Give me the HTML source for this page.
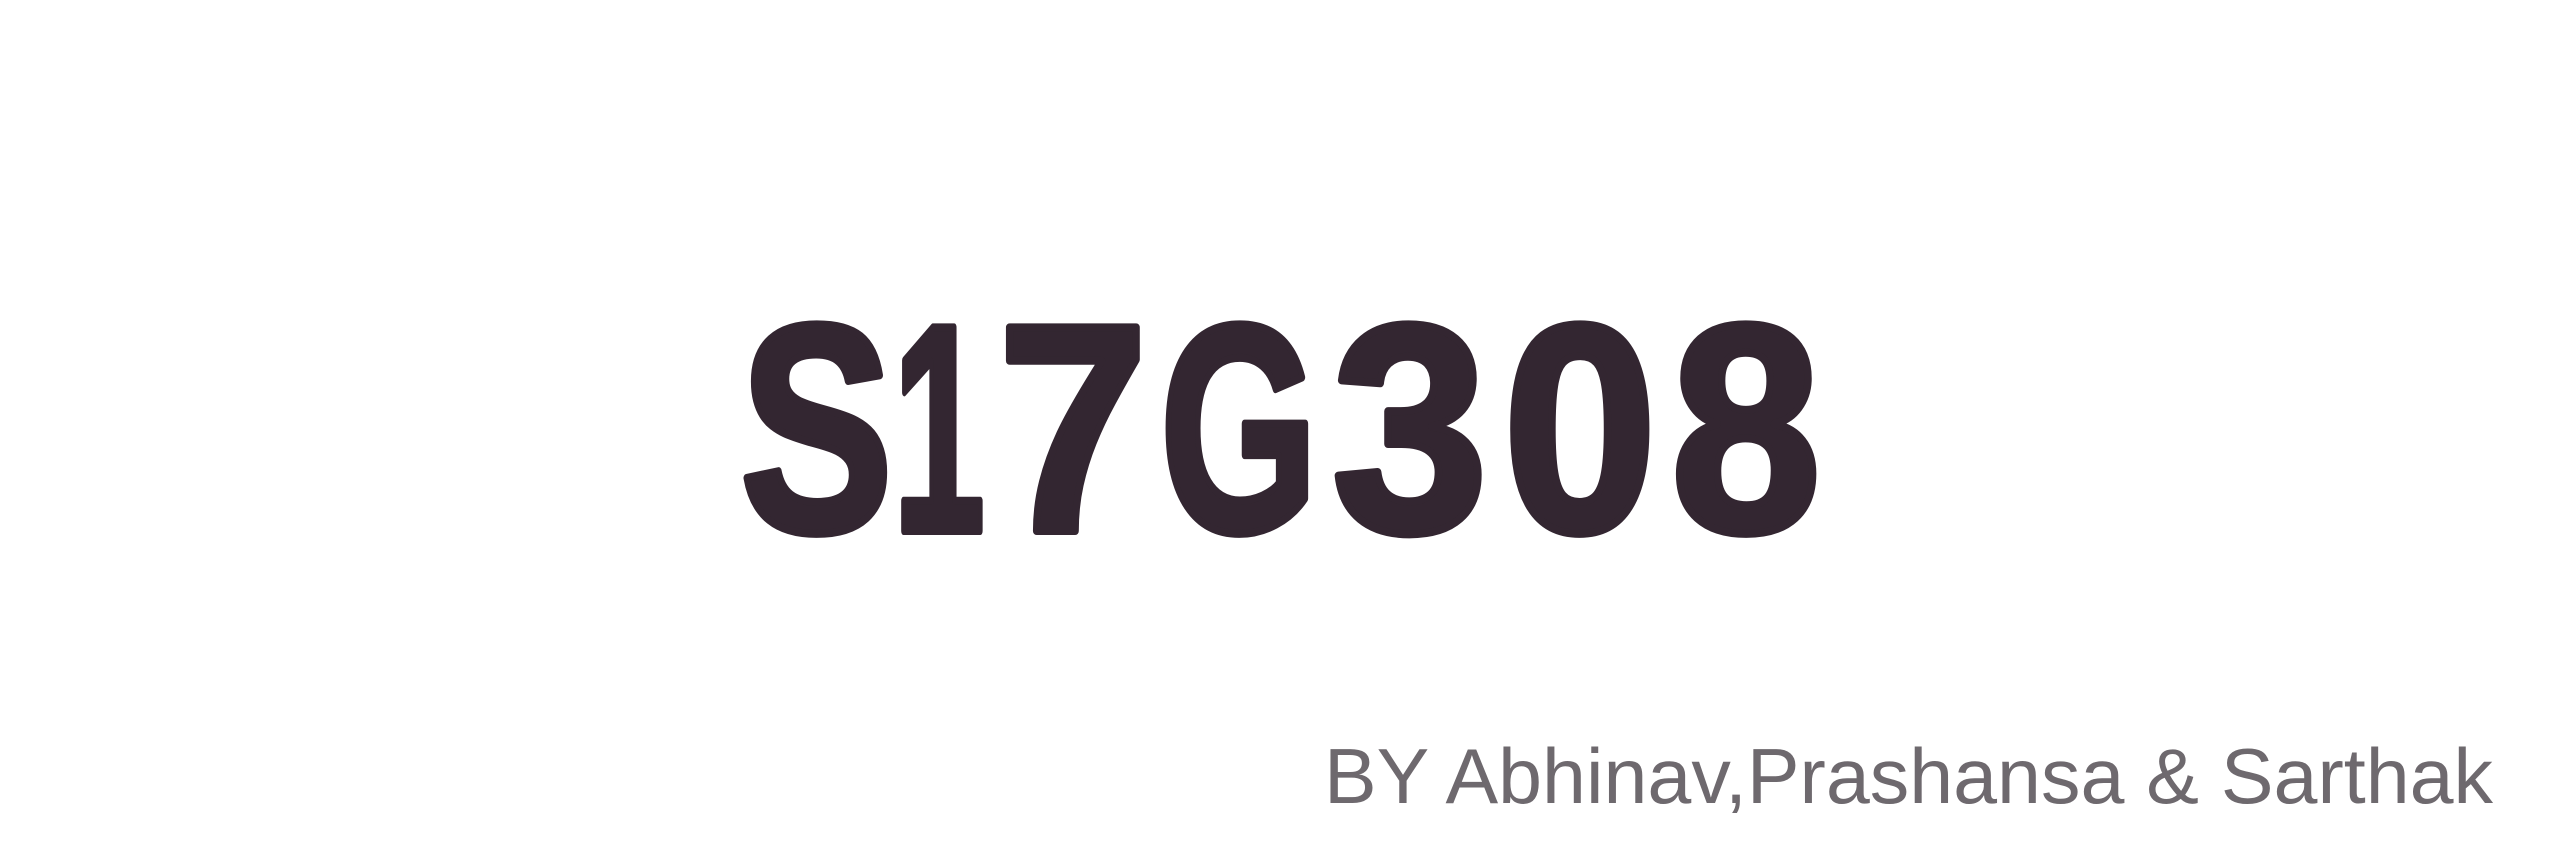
<!DOCTYPE html>
<html><head><meta charset="utf-8"><style>
html,body{margin:0;padding:0;background:#fff;width:2560px;height:853px;overflow:hidden}
</style></head><body>
<svg width="2560" height="853" viewBox="0 0 2560 853" xmlns="http://www.w3.org/2000/svg">
<g font-family="Liberation Sans, sans-serif" font-weight="bold" font-size="296" fill="#332631" stroke="#332631" stroke-width="8" stroke-linejoin="round">
<text x="740" y="531" textLength="153" lengthAdjust="spacingAndGlyphs">S</text>
<text x="893" y="531" textLength="92" lengthAdjust="spacingAndGlyphs">1</text>
<text x="998" y="531" textLength="150" lengthAdjust="spacingAndGlyphs">7</text>
<text x="1160" y="531" textLength="158" lengthAdjust="spacingAndGlyphs">G</text>
<text x="1332" y="531" textLength="156" lengthAdjust="spacingAndGlyphs">3</text>
<text x="1503" y="531" textLength="154" lengthAdjust="spacingAndGlyphs">0</text>
<text x="1671" y="531" textLength="150" lengthAdjust="spacingAndGlyphs">8</text>
</g>
<text x="1324" y="803" font-family="Liberation Sans, sans-serif" font-size="78" fill="#6e696e" textLength="1169" lengthAdjust="spacingAndGlyphs">BY Abhinav,Prashansa &amp; Sarthak</text>
</svg>
</body></html>
